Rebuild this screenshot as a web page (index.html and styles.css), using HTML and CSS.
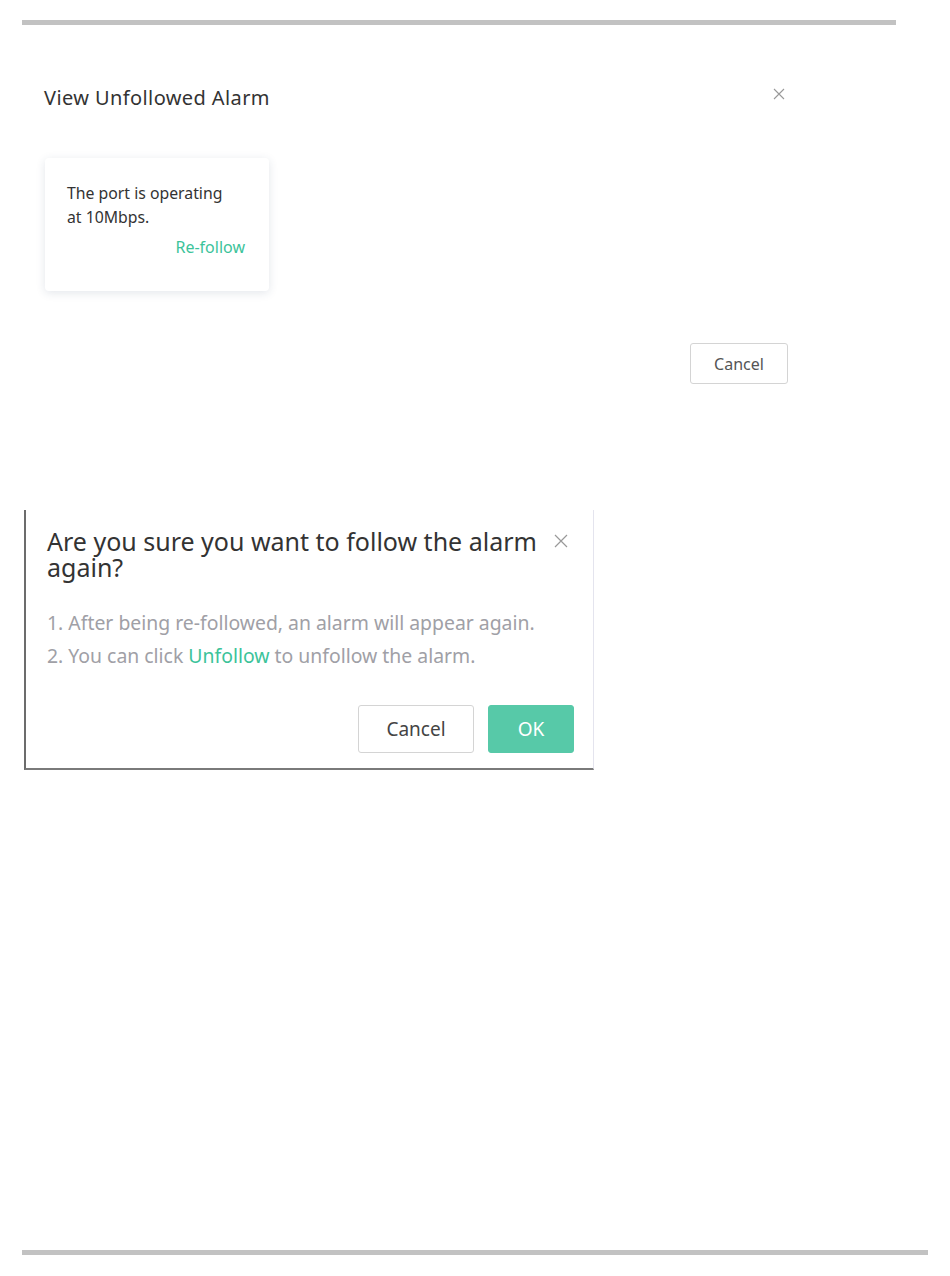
FILE: index.html
```html
<!DOCTYPE html>
<html lang="en">
<head>
    <meta charset="UTF-8">
    <meta name="viewport" content="width=device-width, initial-scale=1.0">
    <title>View Unfollowed Alarm</title>
    <link rel="stylesheet" href="styles.css">
</head>
<body>

<div class="rule rule-top"></div>

<!-- Panel: list of unfollowed alarms -->
<div class="panel">
    <div class="panel-header">
        <span class="panel-title">View Unfollowed Alarm</span>
        <span class="close">
            <svg width="12" height="12" viewBox="0 0 12 12"><path d="M1 1L11 11M11 1L1 11" stroke="#999" stroke-width="1.1" fill="none"/></svg>
        </span>
    </div>

    <div class="alarm-card">
        <p class="alarm-text">The port is operating at 10Mbps.</p>
        <div class="alarm-action"><a class="link" href="#">Re-follow</a></div>
    </div>

    <div class="panel-footer">
        <button class="btn">Cancel</button>
    </div>
</div>

<!-- Confirm dialog -->
<div class="dialog">
    <div class="dialog-header">
        <h2 class="dialog-title">Are you sure you want to follow the alarm again?</h2>
        <span class="close close-lg">
            <svg width="14" height="14" viewBox="0 0 14 14"><path d="M1 1L13 13M13 1L1 13" stroke="#999" stroke-width="1.2" fill="none"/></svg>
        </span>
    </div>
    <div class="dialog-body">
        <p>1. After being re-followed, an alarm will appear again.</p>
        <p>2. You can click <a class="link" href="#">Unfollow</a> to unfollow the alarm.</p>
    </div>
    <div class="dialog-footer">
        <button class="btn btn-lg">Cancel</button>
        <button class="btn btn-lg btn-primary">OK</button>
    </div>
</div>

<div class="rule rule-bottom"></div>

</body>
</html>
```

FILE: styles.css
```css
body {
    font-family: "Noto Sans", "Open Sans", sans-serif;
    margin: 0;
    background-color: #fff;
    color: #333;
    height: 1276px;
    display: flex;
    flex-direction: column;
}

.rule {
    height: 5px;
    background-color: #c2c2c2;
    margin-left: 22px;
}

.rule-top {
    width: 874px;
    margin-top: 20px;
}

.rule-bottom {
    width: 906px;
    margin-top: auto;
    margin-bottom: 21px;
}

.panel {
    width: 744px;
    margin-left: 44px;
    margin-top: 58px;
}

.panel-header {
    display: flex;
    justify-content: space-between;
    align-items: center;
    height: 28px;
}

.panel-title {
    font-size: 20px;
    color: #333;
    letter-spacing: 0.4px;
}

.close {
    display: flex;
    margin-right: 3px;
    margin-top: -7px;
}

.alarm-card {
    width: 224px;
    height: 133px;
    box-sizing: border-box;
    margin-top: 47px;
    margin-left: 1px;
    padding: 23px 24px 0 22px;
    background-color: #fff;
    border-radius: 4px;
    box-shadow: 0 2px 10px rgba(40, 60, 100, 0.13);
}

.alarm-text {
    margin: 0;
    font-size: 15.8px;
    line-height: 24px;
    color: #333;
    padding-right: 8px;
}

.alarm-action {
    text-align: right;
    margin-top: 7px;
    font-size: 16px;
}

.link {
    color: #3cc39a;
    text-decoration: none;
}

.panel-footer {
    display: flex;
    justify-content: flex-end;
    margin-top: 52px;
}

.btn {
    font-family: inherit;
    width: 98px;
    height: 41px;
    font-size: 16px;
    color: #555;
    background-color: #fff;
    border: 1px solid #d4d4d4;
    border-radius: 3px;
    cursor: pointer;
}

.dialog {
    width: 570px;
    height: 260px;
    box-sizing: border-box;
    margin-left: 24px;
    margin-top: 126px;
    border-left: 2px solid #6c6c6c;
    border-bottom: 2px solid #7a7a7a;
    border-right: 1px solid #e4e4ee;
    padding: 18px 19px 0 21px;
    display: flex;
    flex-direction: column;
}

.dialog-header {
    display: flex;
    justify-content: space-between;
    align-items: flex-start;
}

.dialog-title {
    margin: 0;
    font-size: 25px;
    font-weight: normal;
    line-height: 26px;
    color: #333;
    width: 500px;
}

.close-lg {
    margin-top: 6px;
    margin-right: 6px;
}

.dialog-body {
    margin-top: 31px;
    font-size: 19.4px;
    color: #a0a0a6;
}

.dialog-body p {
    margin: 0 0 10px 0;
    line-height: 23px;
}

.dialog-footer {
    display: flex;
    justify-content: flex-end;
    gap: 14px;
    margin-top: 28px;
}

.btn-lg {
    width: 116px;
    height: 48px;
    font-size: 19px;
    color: #444;
}

.btn-primary {
    width: 86px;
    background-color: #57c9a8;
    border-color: #57c9a8;
    color: #fff;
}
```
